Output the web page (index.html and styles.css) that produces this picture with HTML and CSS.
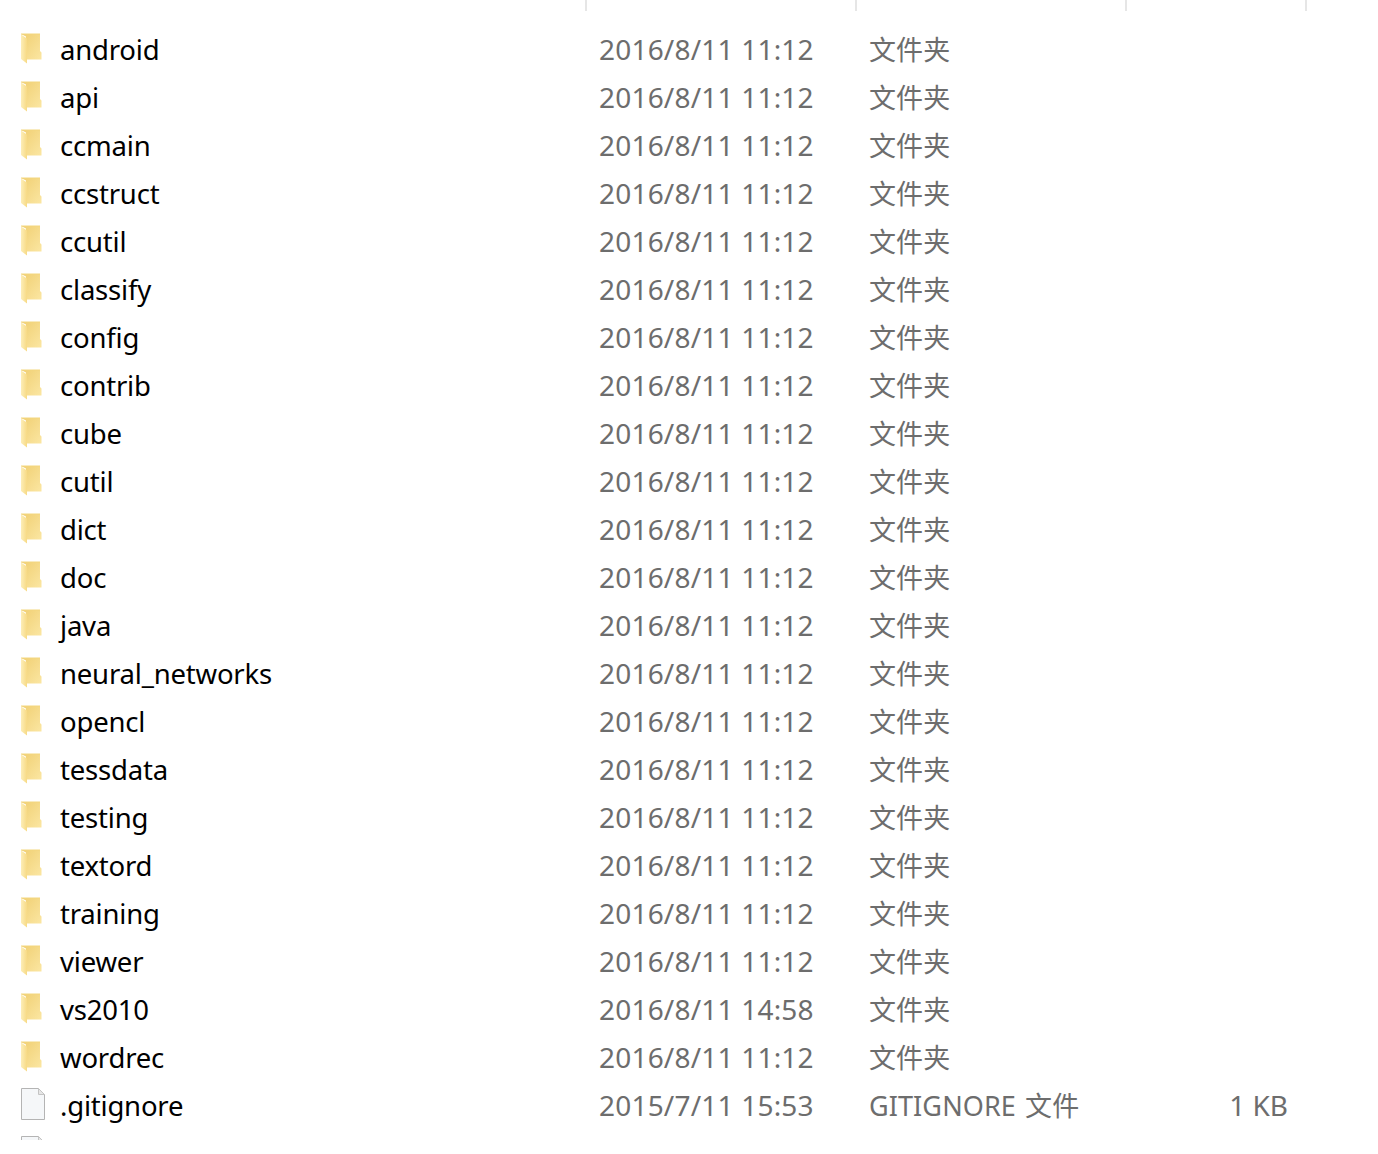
FILE: index.html
```html
<!DOCTYPE html>
<html lang="zh-CN">
<head>
<meta charset="utf-8">
<title>tesseract</title>
<link rel="stylesheet" href="styles.css">
</head>
<body>
<svg class="defs" width="0" height="0" aria-hidden="true">
  <defs>
    <linearGradient id="back" x1="0" y1="0" x2="1" y2="1">
      <stop offset="0" stop-color="#f0cf72"/>
      <stop offset="1" stop-color="#fbe6a2"/>
    </linearGradient>
    <linearGradient id="flap" x1="0" y1="0" x2="1" y2="0">
      <stop offset="0" stop-color="#fdeeb8"/>
      <stop offset="1" stop-color="#f7da85"/>
    </linearGradient>
    <symbol id="folder" viewBox="0 0 22 32">
      <path d="M1 1H20V18L21.500 19.500V26.500H6V3.500Z" fill="url(#back)"/>
      <path d="M1 1.500L7 5.500V30.500L1 26Z" fill="url(#flap)"/>
      <path d="M1 1H20" stroke="#f3d67f" fill="none"/>
    </symbol>
    <symbol id="file" viewBox="0 0 26 34">
      <path d="M1.500 1.500H18.500L24.500 7.500V32.500H1.500Z" fill="#f5f7f9" stroke="#b4b4b4"/>
      <path d="M18.500 1.500V7.500H24.500Z" fill="#e6e6e6" stroke="#c4c4c4"/>
    </symbol>
  </defs>
</svg>
<div class="window">
  <div class="head"><span class="hcol c1"></span><span class="hcol c2"></span><span class="hcol c3"></span><span class="hcol c4"></span></div>
  <div class="list">
    <div class="row"><svg class="ico folder"><use href="#folder"/></svg><span class="name">android</span><span class="date">2016/8/11 11:12</span><span class="type">文件夹</span><span class="size"></span></div>
    <div class="row"><svg class="ico folder"><use href="#folder"/></svg><span class="name">api</span><span class="date">2016/8/11 11:12</span><span class="type">文件夹</span><span class="size"></span></div>
    <div class="row"><svg class="ico folder"><use href="#folder"/></svg><span class="name">ccmain</span><span class="date">2016/8/11 11:12</span><span class="type">文件夹</span><span class="size"></span></div>
    <div class="row"><svg class="ico folder"><use href="#folder"/></svg><span class="name">ccstruct</span><span class="date">2016/8/11 11:12</span><span class="type">文件夹</span><span class="size"></span></div>
    <div class="row"><svg class="ico folder"><use href="#folder"/></svg><span class="name">ccutil</span><span class="date">2016/8/11 11:12</span><span class="type">文件夹</span><span class="size"></span></div>
    <div class="row"><svg class="ico folder"><use href="#folder"/></svg><span class="name">classify</span><span class="date">2016/8/11 11:12</span><span class="type">文件夹</span><span class="size"></span></div>
    <div class="row"><svg class="ico folder"><use href="#folder"/></svg><span class="name">config</span><span class="date">2016/8/11 11:12</span><span class="type">文件夹</span><span class="size"></span></div>
    <div class="row"><svg class="ico folder"><use href="#folder"/></svg><span class="name">contrib</span><span class="date">2016/8/11 11:12</span><span class="type">文件夹</span><span class="size"></span></div>
    <div class="row"><svg class="ico folder"><use href="#folder"/></svg><span class="name">cube</span><span class="date">2016/8/11 11:12</span><span class="type">文件夹</span><span class="size"></span></div>
    <div class="row"><svg class="ico folder"><use href="#folder"/></svg><span class="name">cutil</span><span class="date">2016/8/11 11:12</span><span class="type">文件夹</span><span class="size"></span></div>
    <div class="row"><svg class="ico folder"><use href="#folder"/></svg><span class="name">dict</span><span class="date">2016/8/11 11:12</span><span class="type">文件夹</span><span class="size"></span></div>
    <div class="row"><svg class="ico folder"><use href="#folder"/></svg><span class="name">doc</span><span class="date">2016/8/11 11:12</span><span class="type">文件夹</span><span class="size"></span></div>
    <div class="row"><svg class="ico folder"><use href="#folder"/></svg><span class="name">java</span><span class="date">2016/8/11 11:12</span><span class="type">文件夹</span><span class="size"></span></div>
    <div class="row"><svg class="ico folder"><use href="#folder"/></svg><span class="name">neural_networks</span><span class="date">2016/8/11 11:12</span><span class="type">文件夹</span><span class="size"></span></div>
    <div class="row"><svg class="ico folder"><use href="#folder"/></svg><span class="name">opencl</span><span class="date">2016/8/11 11:12</span><span class="type">文件夹</span><span class="size"></span></div>
    <div class="row"><svg class="ico folder"><use href="#folder"/></svg><span class="name">tessdata</span><span class="date">2016/8/11 11:12</span><span class="type">文件夹</span><span class="size"></span></div>
    <div class="row"><svg class="ico folder"><use href="#folder"/></svg><span class="name">testing</span><span class="date">2016/8/11 11:12</span><span class="type">文件夹</span><span class="size"></span></div>
    <div class="row"><svg class="ico folder"><use href="#folder"/></svg><span class="name">textord</span><span class="date">2016/8/11 11:12</span><span class="type">文件夹</span><span class="size"></span></div>
    <div class="row"><svg class="ico folder"><use href="#folder"/></svg><span class="name">training</span><span class="date">2016/8/11 11:12</span><span class="type">文件夹</span><span class="size"></span></div>
    <div class="row"><svg class="ico folder"><use href="#folder"/></svg><span class="name">viewer</span><span class="date">2016/8/11 11:12</span><span class="type">文件夹</span><span class="size"></span></div>
    <div class="row"><svg class="ico folder"><use href="#folder"/></svg><span class="name">vs2010</span><span class="date">2016/8/11 14:58</span><span class="type">文件夹</span><span class="size"></span></div>
    <div class="row"><svg class="ico folder"><use href="#folder"/></svg><span class="name">wordrec</span><span class="date">2016/8/11 11:12</span><span class="type">文件夹</span><span class="size"></span></div>
    <div class="row"><svg class="ico file"><use href="#file"/></svg><span class="name">.gitignore</span><span class="date">2015/7/11 15:53</span><span class="type">GITIGNORE 文件</span><span class="size">1 KB</span></div>
    <div class="row"><svg class="ico file"><use href="#file"/></svg></div>
  </div>
</div>
</body>
</html>
```
FILE: styles.css
```css
html, body {
  margin: 0;
  padding: 0;
  background: #fff;
}
body {
  font-family: "Noto Sans", "Noto Sans CJK SC", sans-serif;
  font-size: 28px;
}
.defs {
  display: block;
  height: 0;
}
.window {
  width: 1378px;
  height: 1154px;
  overflow: hidden;
}
.head {
  display: grid;
  grid-template-columns: 587px 270px 270px 180px 1fr;
  height: 11px;
}
.hcol {
  grid-row: 1;
  border-right: 2px solid #e6e6e6;
}
.list {
  margin-top: 15px;
  height: 1114px;
  overflow: hidden;
}
.row {
  display: grid;
  grid-template-columns: 21px 39px 539px 270px 181px 238px 1fr;
  height: 48px;
  line-height: 48px;
  white-space: nowrap;
}
.ico {
  grid-column: 1 / span 2;
  grid-row: 1;
  margin-left: 20px;
}
.folder {
  width: 22px;
  height: 32px;
  margin-top: 7px;
}
.file {
  width: 26px;
  height: 34px;
  margin-top: 5px;
}
.name {
  grid-column: 3;
  grid-row: 1;
  color: #000;
  font-size: 27.5px;
  letter-spacing: -0.2px;
}
.date {
  grid-column: 4;
  grid-row: 1;
  color: #6d6d6d;
  letter-spacing: 0.2px;
  line-height: 46px;
}
.type {
  grid-column: 5;
  grid-row: 1;
  color: #6d6d6d;
  font-size: 27px;
  letter-spacing: 0.1px;
  word-spacing: 2px;
}
.size {
  grid-column: 5 / span 2;
  grid-row: 1;
  color: #6d6d6d;
  text-align: right;
  line-height: 46px;
}
```
